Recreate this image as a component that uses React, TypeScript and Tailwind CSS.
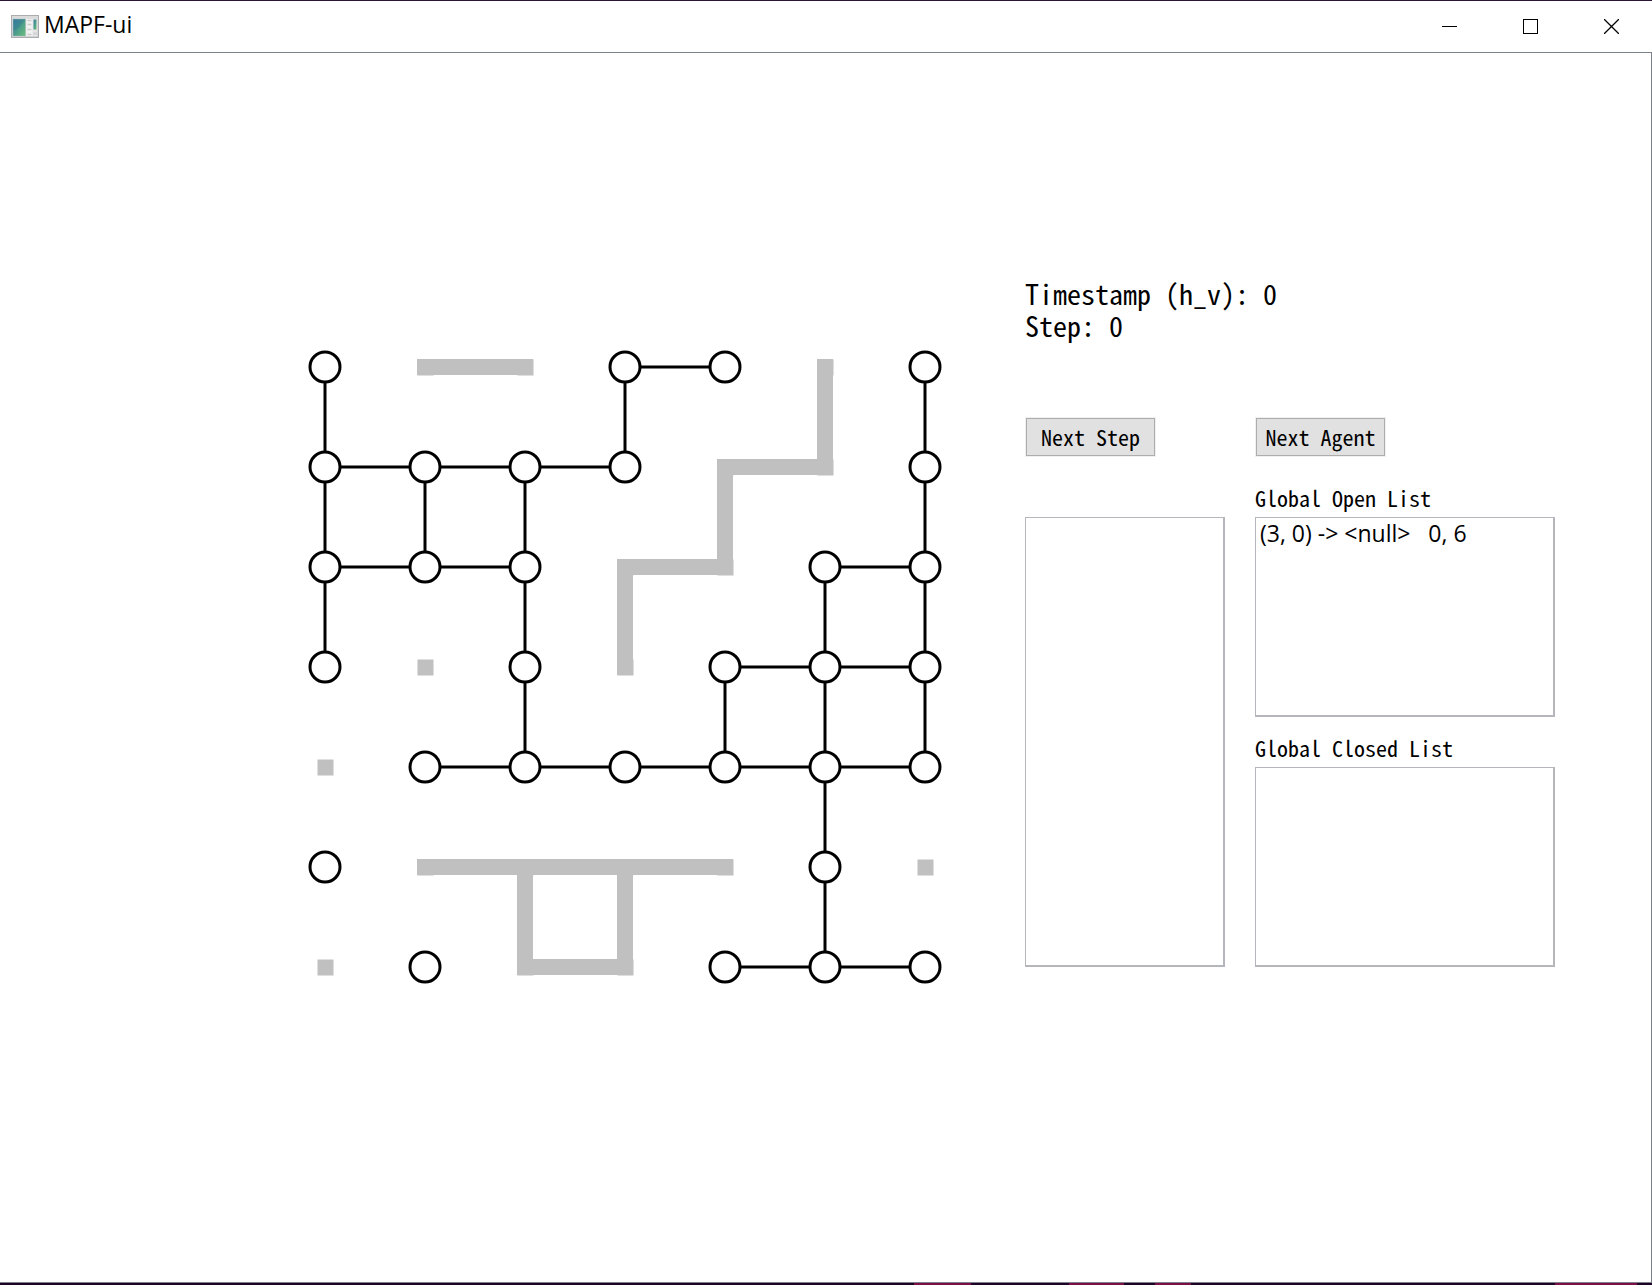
import React from "react";

type Cell = [number, number];
type Segment = [number, number, number, number];

const STEP = 100;
const ORIGIN = 20;
const at = (n: number) => ORIGIN + n * STEP;

// 1 marks a free vertex, 0 marks an obstacle
const grid = [
  [1, 0, 0, 1, 1, 0, 1],
  [1, 1, 1, 1, 0, 0, 1],
  [1, 1, 1, 0, 0, 1, 1],
  [1, 0, 1, 0, 1, 1, 1],
  [0, 1, 1, 1, 1, 1, 1],
  [1, 0, 0, 0, 0, 1, 0],
  [0, 1, 0, 0, 1, 1, 1],
];

function connect(kind: number): Segment[] {
  const out: Segment[] = [];
  grid.forEach((row, y) =>
    row.forEach((v, x) => {
      if (v !== kind) return;
      if (row[x + 1] === kind) out.push([x, y, x + 1, y]);
      if (grid[y + 1]?.[x] === kind) out.push([x, y, x, y + 1]);
    }),
  );
  return out;
}

const cells = (kind: number): Cell[] =>
  grid.flatMap((row, y) =>
    row.flatMap((v, x) => (v === kind ? [[x, y] as Cell] : [])),
  );

function Graph() {
  return (
    <svg
      viewBox="0 0 640 640"
      className="mt-[70px] h-[640px] w-[640px] shrink-0"
      role="img"
      aria-label="Grid map"
    >
      <g fill="#c0c0c0">
        {cells(0).map(([x, y]) => (
          <rect key={`${x}-${y}`} x={at(x) - 7.5} y={at(y) - 7.5} width="16" height="16" />
        ))}
        {connect(0).map(([x1, y1, x2, y2]) => (
          <rect
            key={`${x1}${y1}${x2}${y2}`}
            x={at(x1) - 8}
            y={at(y1) - 8}
            width={at(x2) - at(x1) + 16}
            height={at(y2) - at(y1) + 16}
          />
        ))}
      </g>
      <g stroke="#000" strokeWidth="3" fill="#fff">
        {connect(1).map(([x1, y1, x2, y2]) => (
          <line key={`${x1}${y1}${x2}${y2}`} x1={at(x1)} y1={at(y1)} x2={at(x2)} y2={at(y2)} />
        ))}
        {cells(1).map(([x, y]) => (
          <circle key={`${x}-${y}`} cx={at(x)} cy={at(y)} r="15" />
        ))}
      </g>
    </svg>
  );
}

function AppIcon() {
  return (
    <svg width="28" height="24" viewBox="0 0 28 24" aria-hidden="true">
      <defs>
        <linearGradient id="pane" x1="0" y1="0" x2="1" y2="1">
          <stop offset="0" stopColor="#3f7fa6" />
          <stop offset="0.5" stopColor="#4a9c8c" />
          <stop offset="1" stopColor="#6cc07a" />
        </linearGradient>
        <linearGradient id="frame" x1="0" y1="0" x2="0" y2="1">
          <stop offset="0" stopColor="#dcdcdc" />
          <stop offset="1" stopColor="#c4c4c4" />
        </linearGradient>
      </defs>
      <rect x="0.5" y="0.5" width="27" height="22" fill="url(#frame)" stroke="#a9adb0" />
      <rect x="1.5" y="3.5" width="25" height="18" fill="#e4e4e4" />
      <rect x="2" y="4" width="12.5" height="17" fill="url(#pane)" stroke="#9fb9bd" strokeWidth="0.5" />
      <path d="M2.500 16C7 14 11 9 14 4.500H2.500z" fill="#2f6f8f" opacity="0.35" />
      <rect x="15.500" y="4" width="6" height="17" fill="#f2f2f2" />
      <path d="M16.500 5.500h4M16.500 9.500h4M16.500 14.500h4M16.500 19.500h4" stroke="#c9cbcc" strokeWidth="1.500" />
      <rect x="22.500" y="4.500" width="3" height="10" fill="url(#pane)" />
      <path d="M22 18.500h4" stroke="#cfd1d2" strokeWidth="2" />
    </svg>
  );
}

function TitleBar() {
  const control = "flex w-[81px] items-center justify-center";
  return (
    <header className="flex h-[53px] border-t border-b border-t-[#2b1638] border-b-[#7b808a] bg-white">
      <div className="flex flex-1 items-center gap-[5px] pl-[11px]">
        <AppIcon />
        <h1 className="pb-1 font-['Open_Sans',sans-serif] text-[23px] leading-none">MAPF-ui</h1>
      </div>
      <button className={control} aria-label="Minimize">
        <svg width="15" height="15" shapeRendering="crispEdges">
          <path d="M0 7.5h15" stroke="#000" />
        </svg>
      </button>
      <button className={control} aria-label="Maximize">
        <svg width="15" height="15" shapeRendering="crispEdges">
          <rect x="0.5" y="0.5" width="14" height="14" fill="none" stroke="#000" />
        </svg>
      </button>
      <button className={control} aria-label="Close">
        <svg width="15" height="15">
          <path d="M0 0l15 15M15 0L0 15" stroke="#000" strokeWidth="1.25" />
        </svg>
      </button>
    </header>
  );
}

function ActionButton({ children }: { children: React.ReactNode }) {
  return (
    <button className="h-[38px] w-[129px] border border-[#adadad] bg-[#e1e1e1] pb-0.5 text-[22px] leading-none whitespace-nowrap outline outline-[#f0f0f0]">
      {children}
    </button>
  );
}

function ListBox({ label, items = [] }: { label: string; items?: string[] }) {
  return (
    <ul
      aria-label={label}
      className="flex-1 border border-r-2 border-b-2 border-[#b4b6bb] px-1 font-['Open_Sans',sans-serif] text-[23px] leading-[30px] font-normal whitespace-pre"
    >
      {items.map((item) => (
        <li key={item}>{item}</li>
      ))}
    </ul>
  );
}

function Panel() {
  return (
    <div className="font-['Noto_Sans_Mono_CJK_SC','Liberation_Mono',monospace] font-light">
      <p className="h-[141px] text-[28px] leading-8">
        Timestamp (h_v): 0
        <br />
        Step: 0
      </p>
      <div className="grid grid-cols-[200px_300px] gap-x-[30px]">
        <div className="pl-px">
          <ActionButton>Next Step</ActionButton>
        </div>
        <div className="pl-px">
          <ActionButton>Next Agent</ActionButton>
        </div>
        <div className="flex h-[511px] flex-col pt-[61px]">
          <ListBox label="Agent list" />
        </div>
        <div className="flex h-[511px] flex-col pt-[25px] text-[22px]">
          <h2 className="h-9 leading-8">Global Open List</h2>
          <ListBox label="Global Open List" items={["(3, 0) -> <null>   0, 6"]} />
          <h2 className="mt-[14px] h-9 leading-8">Global Closed List</h2>
          <ListBox label="Global Closed List" />
        </div>
      </div>
    </div>
  );
}

function BottomEdge() {
  return (
    <div className="flex h-0.5 bg-[#1a0524]">
      <div className="w-[914px]" />
      <div className="w-[57px] bg-[#7a1045]" />
      <div className="w-[98px]" />
      <div className="w-[55px] bg-[#7a1045]" />
      <div className="w-[31px]" />
      <div className="w-[36px] bg-[#7a1045]" />
      <div className="flex-1" />
      <div className="w-[82px] bg-[#7a1045]" />
      <div className="w-[15px]" />
    </div>
  );
}

export default function App() {
  return (
    <div className="flex min-h-screen flex-col bg-white text-black">
      <TitleBar />
      <main className="flex flex-1 items-start gap-20 border-r border-b border-[#7b808a] pt-56 pl-[305px]">
        <Graph />
        <Panel />
      </main>
      <BottomEdge />
    </div>
  );
}
